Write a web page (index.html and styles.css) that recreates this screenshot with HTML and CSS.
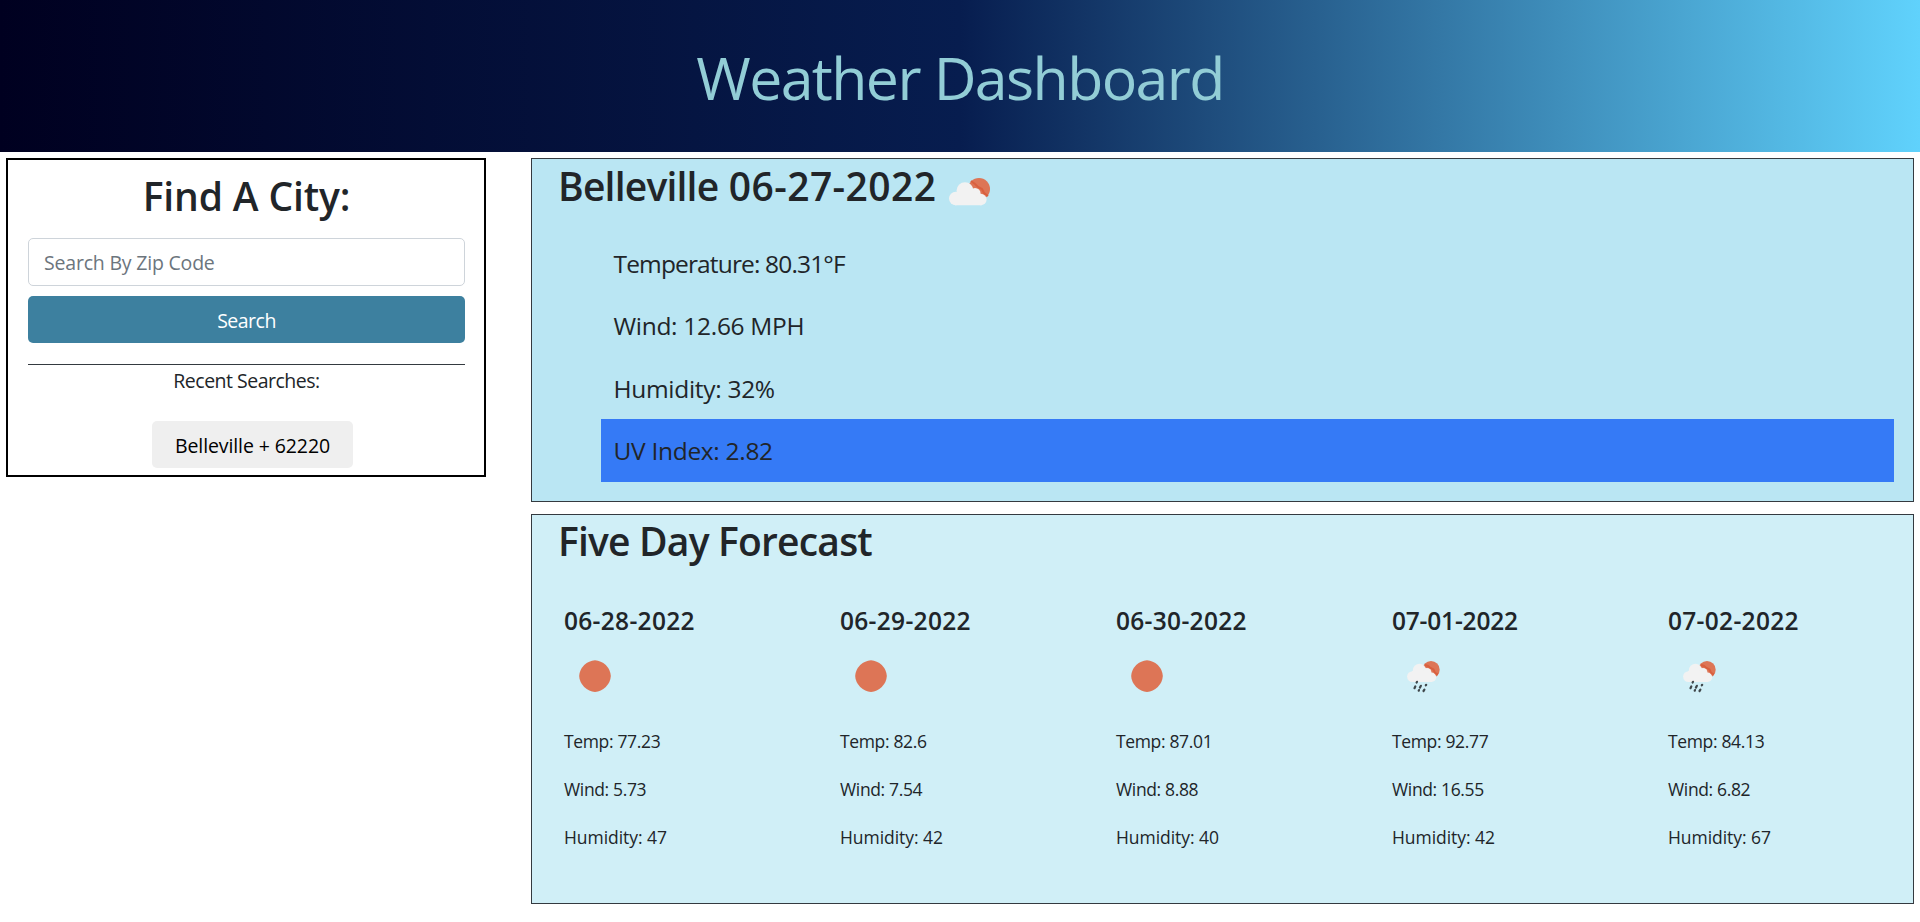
FILE: index.html
```html
<!DOCTYPE html>
<html lang="en">
<head>
<meta charset="utf-8">
<title>Weather Dashboard</title>
<link rel="stylesheet" href="styles.css">
</head>
<body>
<svg class="defs" width="0" height="0" aria-hidden="true">
  <symbol id="sun" viewBox="0 0 62 62">
    <path d="M31 15.2q6 .4 10.8 4.8q4.800 5 5 11q-.2 6-5 11q-4.800 4.500-10.800 4.900q-6-.4-10.800-4.900q-4.800-5-5-11q.2-6 5-11q4.800-4.400 10.800-4.800z" fill="#dd7556"/>
  </symbol>
  <symbol id="rain" viewBox="0 0 62 62">
    <circle cx="39" cy="24.700" r="8.700" fill="#dd7556"/>
    <path d="M33 20l3 1l2.500 2l3 1.500l1.500 3.500l3 1.500" stroke="#d9603f" stroke-width="2" fill="none"/>
    <g fill="#f2f2f2"><circle cx="20.500" cy="31.600" r="5.400"/><circle cx="27.500" cy="25.500" r="6.700"/><circle cx="35" cy="27.500" r="4.500"/><circle cx="39.500" cy="32.300" r="4.700"/><path d="M20 26h17l3 11H20z"/></g>
    <g stroke="#3f474b" stroke-width="2.200" stroke-linecap="round"><path d="M25 36.800l-.4.7M23.300 41.500l-.8 1.700M28.900 40.800l-1 1.800M34.200 39.800l-.4.500M27 45.100l-.3.600M32.400 44.700l-.9 1.300"/></g>
  </symbol>
</svg>
<header class="banner"><h1 class="banner-title">Weather Dashboard</h1></header>
<main class="layout">
  <section class="finder">
    <h2 class="finder-title">Find A City:</h2>
    <input class="zip" type="text" placeholder="Search By Zip Code">
    <button class="search">Search</button>
    <div class="recent">
      <p class="recent-label">Recent Searches:</p>
      <button class="recent-item">Belleville + 62220</button>
    </div>
  </section>
  <div class="results">
    <section class="panel current">
      <div class="heading"><h2 class="panel-title city"><span class="city-name">Belleville</span> 06-27-2022</h2>
        <svg class="now-icon" viewBox="0 0 44 32">
          <circle cx="33" cy="13" r="11" fill="#dd7556"/>
          <path d="M25 5l4 3l3 3l4 2l2 4l4 3" stroke="#d9603f" stroke-width="2" fill="none"/>
          <g fill="#f2f2f2"><circle cx="9.700" cy="22.500" r="6.700"/><circle cx="19" cy="14.800" r="8.500"/><circle cx="29" cy="17.500" r="5.600"/><circle cx="34.800" cy="23.500" r="5.800"/><path d="M9 16h22l5 13.300H9z"/></g>
        </svg>
      </div>
      <ul class="stats">
        <li class="stat temperature">Temperature: 80.31°F</li>
        <li class="stat">Wind: 12.66 MPH</li>
        <li class="stat">Humidity: 32%</li>
        <li class="stat uv">UV Index: 2.82</li>
      </ul>
    </section>
    <section class="panel forecast">
      <h2 class="panel-title forecast-title">Five Day Forecast</h2>
      <div class="days">
        <article class="day"><h3 class="date">06-28-2022</h3><svg class="day-icon"><use href="#sun"/></svg><p class="line">Temp: 77.23</p><p class="line">Wind: 5.73</p><p class="line humidity">Humidity: 47</p></article>
        <article class="day"><h3 class="date">06-29-2022</h3><svg class="day-icon"><use href="#sun"/></svg><p class="line">Temp: 82.6</p><p class="line">Wind: 7.54</p><p class="line humidity">Humidity: 42</p></article>
        <article class="day"><h3 class="date">06-30-2022</h3><svg class="day-icon"><use href="#sun"/></svg><p class="line">Temp: 87.01</p><p class="line">Wind: 8.88</p><p class="line humidity">Humidity: 40</p></article>
        <article class="day"><h3 class="date narrow">07-01-2022</h3><svg class="day-icon"><use href="#rain"/></svg><p class="line">Temp: 92.77</p><p class="line">Wind: 16.55</p><p class="line humidity">Humidity: 42</p></article>
        <article class="day"><h3 class="date">07-02-2022</h3><svg class="day-icon"><use href="#rain"/></svg><p class="line">Temp: 84.13</p><p class="line">Wind: 6.82</p><p class="line humidity">Humidity: 67</p></article>
      </div>
    </section>
  </div>
</main>
</body>
</html>
```
FILE: styles.css
```css
* { box-sizing: border-box; margin: 0; padding: 0; }
body { font-family: "Open Sans", "Noto Sans", sans-serif; font-size: 20px; line-height: 30px; color: #212529; background: #fff; overflow: hidden; }
.defs { display: none; }
.banner { height: 152px; padding-top: 41px; text-align: center; background: linear-gradient(to right, #000020 0%, #071d4f 50%, #60d2fc 100%); }
.banner-title { font-size: 59px; font-weight: 400; line-height: 72px; letter-spacing: -1.6px; color: #92cdd6; }
.layout { display: flex; align-items: flex-start; justify-content: space-between; padding: 6px 6px 0; }
.finder { width: 480px; height: 319px; border: 2px solid #000; padding: 12px 19px 0 20px; display: flex; flex-direction: column; }
.finder-title { font-size: 39px; font-weight: 600; line-height: 48px; text-align: center; letter-spacing: -0.15px; }
.zip { margin-top: 18px; height: 48px; border: 1px solid #ced4da; border-radius: 5px; padding: 0 15px; font: inherit; font-size: 19.500px; letter-spacing: -0.2px; }
.zip::placeholder { color: #6c757d; opacity: 1; }
.search { margin-top: 10px; height: 47px; border: 0; border-radius: 5px; background: #3d809f; color: #fff; font: inherit; font-size: 19.500px; letter-spacing: -0.5px; padding-top: 2px; }
.recent { margin-top: 21px; border-top: 1px solid #343a40; display: flex; flex-direction: column; align-items: center; }
.recent-label { font-size: 19.500px; line-height: 32px; letter-spacing: -0.5px; }
.recent-item { margin: 24px 0 0 12px; width: 201px; height: 47px; border: 0; border-radius: 5px; background: #efefef; color: #000; font: inherit; font-size: 19.500px; letter-spacing: -0.1px; padding-top: 2px; }
.results { width: 1383px; display: flex; flex-direction: column; gap: 12px; }
.panel { border: 1px solid #343a40; }
.current { height: 344px; background: #bae6f3; }
.heading { display: flex; align-items: flex-start; }
.panel-title { font-size: 39px; font-weight: 600; line-height: 48px; margin: 3px 0 0 26px; white-space: nowrap; letter-spacing: -0.05px; }
.city { width: 388px; letter-spacing: 0.4px; }
.city-name { letter-spacing: -0.8px; }
.forecast-title { margin-top: 2px; letter-spacing: -0.8px; }
.now-icon { width: 44px; height: 32px; margin-top: 17px; }
.stats { list-style: none; margin: 21px 19px 0 69px; }
.stat { font-size: 24.500px; line-height: 37.500px; height: 62.600px; padding: 13.500px 12.500px 11.500px; letter-spacing: -0.3px; }
.temperature { letter-spacing: -0.85px; }
.uv { height: 63px; background: #357af6; }
.forecast { height: 390px; background: #d0eff7; }
.days { display: grid; grid-template-columns: repeat(5, 276px); margin: 41px 0 0 32px; }
.date { font-size: 24.500px; line-height: 30px; font-weight: 600; letter-spacing: 0.3px; }
.narrow { letter-spacing: -0.2px; }
.day-icon { display: block; width: 62px; height: 62px; margin: 9px 0 20px; }
.line { font-size: 17.500px; font-weight: 400; line-height: 28px; margin-bottom: 20px; letter-spacing: -0.35px; }
.humidity { letter-spacing: -0.05px; }
```
